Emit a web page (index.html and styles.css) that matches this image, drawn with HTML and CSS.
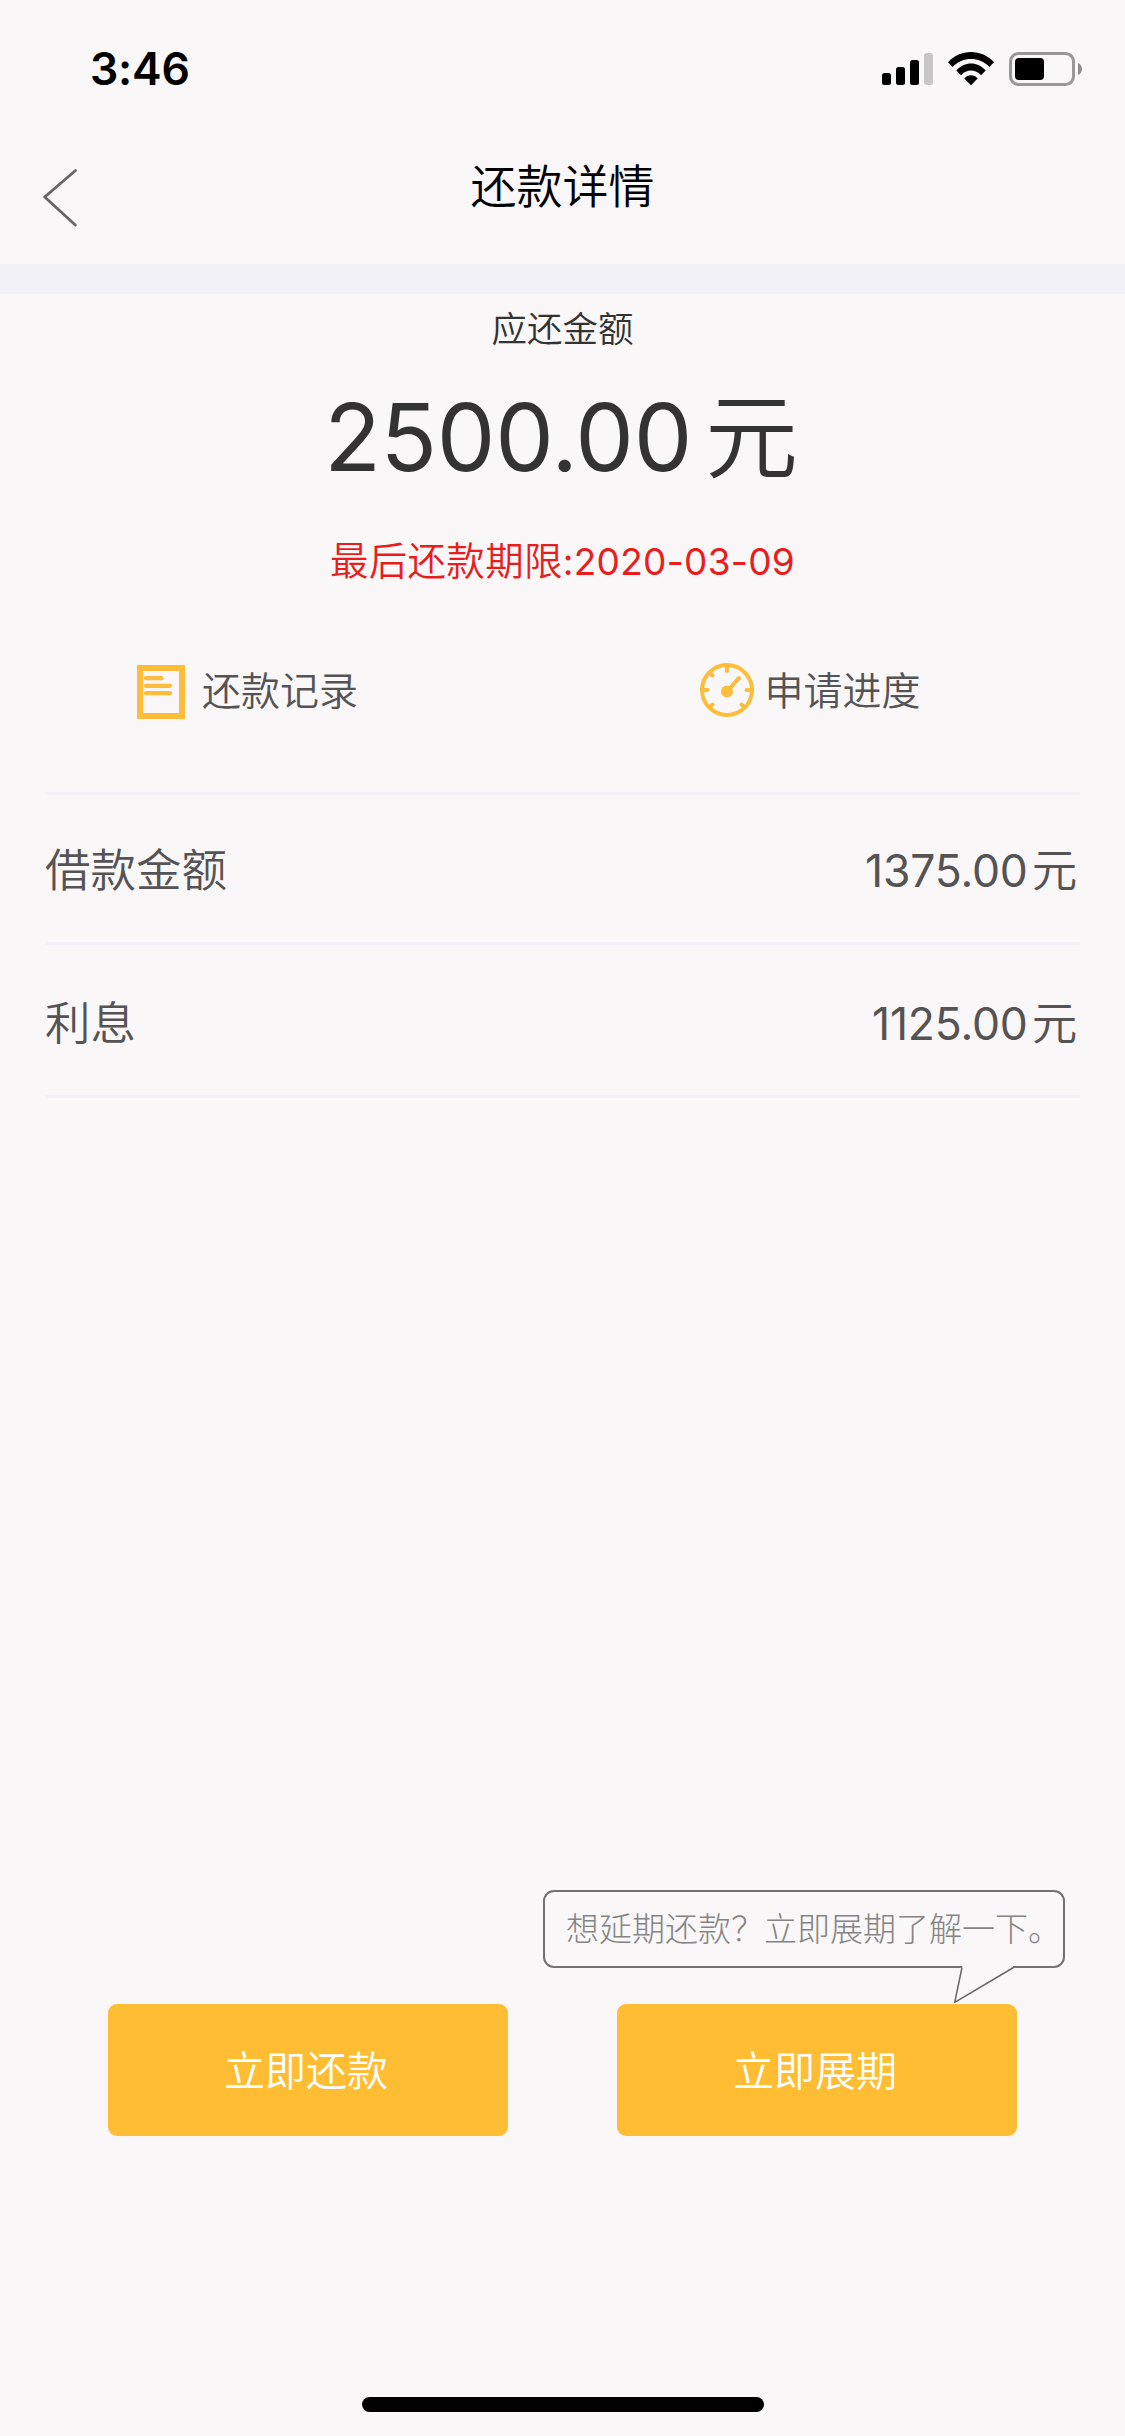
FILE: index.html
```html
<!DOCTYPE html>
<html lang="zh-CN">
<head>
<meta charset="utf-8">
<title>还款详情</title>
<link rel="stylesheet" href="styles.css">
</head>
<body>
<div class="screen">
  <div class="status">
    <span class="time">3:46</span>
    <div class="indicators">
      <svg class="signal" width="51" height="34" viewBox="0 0 51 34">
        <rect x="0" y="21" width="9" height="12" rx="2.5"/>
        <rect x="14" y="15" width="9" height="18" rx="2.5"/>
        <rect x="28" y="8" width="9" height="25" rx="2.5"/>
        <rect x="42" y="1" width="9" height="32" rx="2.5" fill="#c8c6c7"/>
      </svg>
      <svg class="wifi" width="46" height="34" viewBox="0 0 46 34">
        <path d="M0 10.2C12.500-3.300 33.500-3.300 46 10.200L41.300 14.900C31.500 4.500 14.500 4.500 4.700 14.900Z"/>
        <path d="M8.300 18.500C16.500 9 29.500 9 37.700 18.500L33 23.200C27.500 17 18.500 17 13 23.200Z"/>
        <path d="M16.300 26.400C20 22.200 26 22.200 29.700 26.400L23 33.200Z"/>
      </svg>
      <svg class="battery" width="74" height="34" viewBox="0 0 74 34">
        <rect x="1.500" y="1.500" width="63" height="31" rx="8" fill="none" stroke="#999798" stroke-width="3"/>
        <rect x="6" y="6" width="29" height="22" rx="4"/>
        <path d="M69 11C74.300 13 74.300 21 69 23Z" fill="#8d8b8c"/>
      </svg>
    </div>
  </div>

  <header class="header">
    <svg class="back" width="36" height="60" viewBox="0 0 36 60">
      <path d="M32.500 2.500L1.700 29L32.300 57" fill="none" stroke="#666" stroke-width="2.800" stroke-linecap="round" stroke-linejoin="round"/>
    </svg>
    <h1 class="title">还款详情</h1>
  </header>

  <main class="main">
    <section class="summary">
      <p class="caption">应还金额</p>
      <p class="amount">2500.00<span class="unit">元</span></p>
      <p class="deadline"><span class="deadline-label">最后还款期限</span>:2020-03-09</p>
    </section>

    <nav class="links">
      <a class="link link-record">
        <svg width="48" height="60" viewBox="0 0 48 60">
          <rect x="3" y="9" width="42" height="48" fill="none" stroke="#fdbd3a" stroke-width="6"/>
          <path d="M9 19.200H24.500M9 26.800H33M9 34.200H33" stroke="#fdbd3a" stroke-width="4.200" stroke-linecap="round"/>
        </svg>
        <span>还款记录</span>
      </a>
      <a class="link link-progress">
        <svg width="54" height="56" viewBox="0 0 54 56" fill="none" stroke="#fdbd3a" stroke-width="4">
          <circle cx="27" cy="29" r="25"/>
          <path d="M27 4V10M2 29H7.500M46.500 29H52M9.500 11.500L12.500 14.500M9.500 46.500L12.500 43.500M44.500 46.500L41.500 43.500" stroke-linecap="round"/>
          <path d="M27 30.500L39 17" stroke-linecap="round"/>
          <circle cx="27" cy="30.500" r="6" fill="#fdbd3a" stroke="none"/>
        </svg>
        <span>申请进度</span>
      </a>
    </nav>

    <dl class="details">
      <div class="row row-principal"><dt>借款金额</dt><dd>1375.00<span class="unit">元</span></dd></div>
      <div class="row row-interest"><dt>利息</dt><dd>1125.00<span class="unit">元</span></dd></div>
    </dl>
  </main>

  <footer class="footer">
    <div class="bubble">
      想延期还款？立即展期了解一下。
      <svg class="tail" width="64" height="40" viewBox="0 0 64 40">
        <path d="M9.500 0H60V3H8Z" fill="#f9f7f8"/>
        <path d="M9 1.500L1.700 36.300L60.500 1.500" fill="none" stroke="#666" stroke-width="1.500" stroke-linejoin="round"/>
      </svg>
    </div>
    <div class="actions">
      <button class="button">立即还款</button>
      <button class="button">立即展期</button>
    </div>
    <div class="home-bar"></div>
  </footer>
</div>
</body>
</html>
```
FILE: styles.css
```css
* { box-sizing: border-box; margin: 0; padding: 0; }

body {
  background: #f9f7f8;
  font-family: "Noto Sans CJK SC", sans-serif;
  font-weight: 350;
  color: #555354;
}

.screen {
  width: 1125px;
  height: 2436px;
  display: flex;
  flex-direction: column;
  overflow: hidden;
}

.status {
  height: 132px;
  padding: 39px 42px 0 90px;
  display: flex;
  justify-content: space-between;
}

.time {
  font: 600 44.500px/60px Inter, sans-serif;
  letter-spacing: -0.200px;
  color: #000;
}

.indicators { display: flex; padding-top: 13px; }
.wifi { margin-left: 15px; }
.battery { margin-left: 15px; }

.header {
  height: 132px;
  padding: 0 43px;
  display: grid;
  grid-template-columns: 36px 1fr 36px;
  align-items: center;
}

.title {
  padding-bottom: 31px;
  font-size: 46px;
  line-height: 60px;
  font-weight: 350;
  text-align: center;
  color: #000;
}

.main { border-top: 30px solid #f2f1f7; }

.summary { padding-top: 13px; text-align: center; color: #333; }

.caption { font-size: 35.500px; line-height: 40px; }

.amount {
  margin-top: 35px;
  padding-right: 3px;
  font-family: Inter, sans-serif;
  font-weight: 400;
  font-size: 93px;
  line-height: 110px;
  letter-spacing: -0.300px;
}

.unit {
  font-family: "Noto Sans CJK SC", sans-serif;
  font-weight: 350;
  line-height: 0;
}

.amount .unit { margin-left: 13px; font-size: 93px; }

.deadline {
  margin-top: 45px;
  font-family: Inter, sans-serif;
  font-weight: 400;
  font-size: 37px;
  line-height: 50px;
  letter-spacing: 0.300px;
  color: #e81e1e;
}

.deadline-label {
  font-family: "Noto Sans CJK SC", sans-serif;
  font-weight: 350;
  font-size: 38.500px;
  line-height: 0;
}

.links { height: 205px; display: grid; grid-template-columns: 1fr 1fr; }

.link {
  padding: 0 0 2px 137px;
  display: flex;
  align-items: center;
  gap: 17px;
  font-size: 39px;
  line-height: 50px;
}

.link-progress { gap: 11px; }
.link span { margin-top: -1px; }

.details { margin: 0 45px; border-top: 3px solid #f2f1f7; }

.row {
  display: flex;
  justify-content: space-between;
  align-items: baseline;
  border-bottom: 3px solid #f2f1f7;
  font-size: 45.500px;
  line-height: 60px;
}

.row-principal { height: 150px; padding-top: 42px; }
.row-interest { height: 153px; padding-top: 45px; }

.row dd {
  font-family: Inter, sans-serif;
  font-weight: 400;
  font-size: 44.500px;
  letter-spacing: -0.200px;
  padding-right: 3px;
}
.row .unit { margin-left: 4px; font-size: 45.500px; }

.footer {
  flex: 1;
  padding: 792px 0 24px;
  display: flex;
  flex-direction: column;
}

.bubble {
  position: relative;
  align-self: flex-end;
  width: 522px;
  height: 78px;
  margin-right: 60px;
  padding-left: 21px;
  border: 2px solid #737172;
  border-radius: 11px;
  font-size: 33px;
  font-weight: 300;
  line-height: 71px;
  white-space: nowrap;
  color: #858384;
}

.tail { position: absolute; left: 408px; top: 74px; }

.actions { margin: 36px 108px 0; display: flex; justify-content: space-between; }

.button {
  width: 400px;
  height: 132px;
  padding: 0 4px 5px 0;
  border: 0;
  border-radius: 9px;
  background: #ffbd33;
  font: 350 41px/60px "Noto Sans CJK SC", sans-serif;
  color: #fff;
}

.home-bar {
  width: 402px;
  height: 15px;
  margin: auto auto 0;
  border-radius: 8px;
  background: #000;
}
```
